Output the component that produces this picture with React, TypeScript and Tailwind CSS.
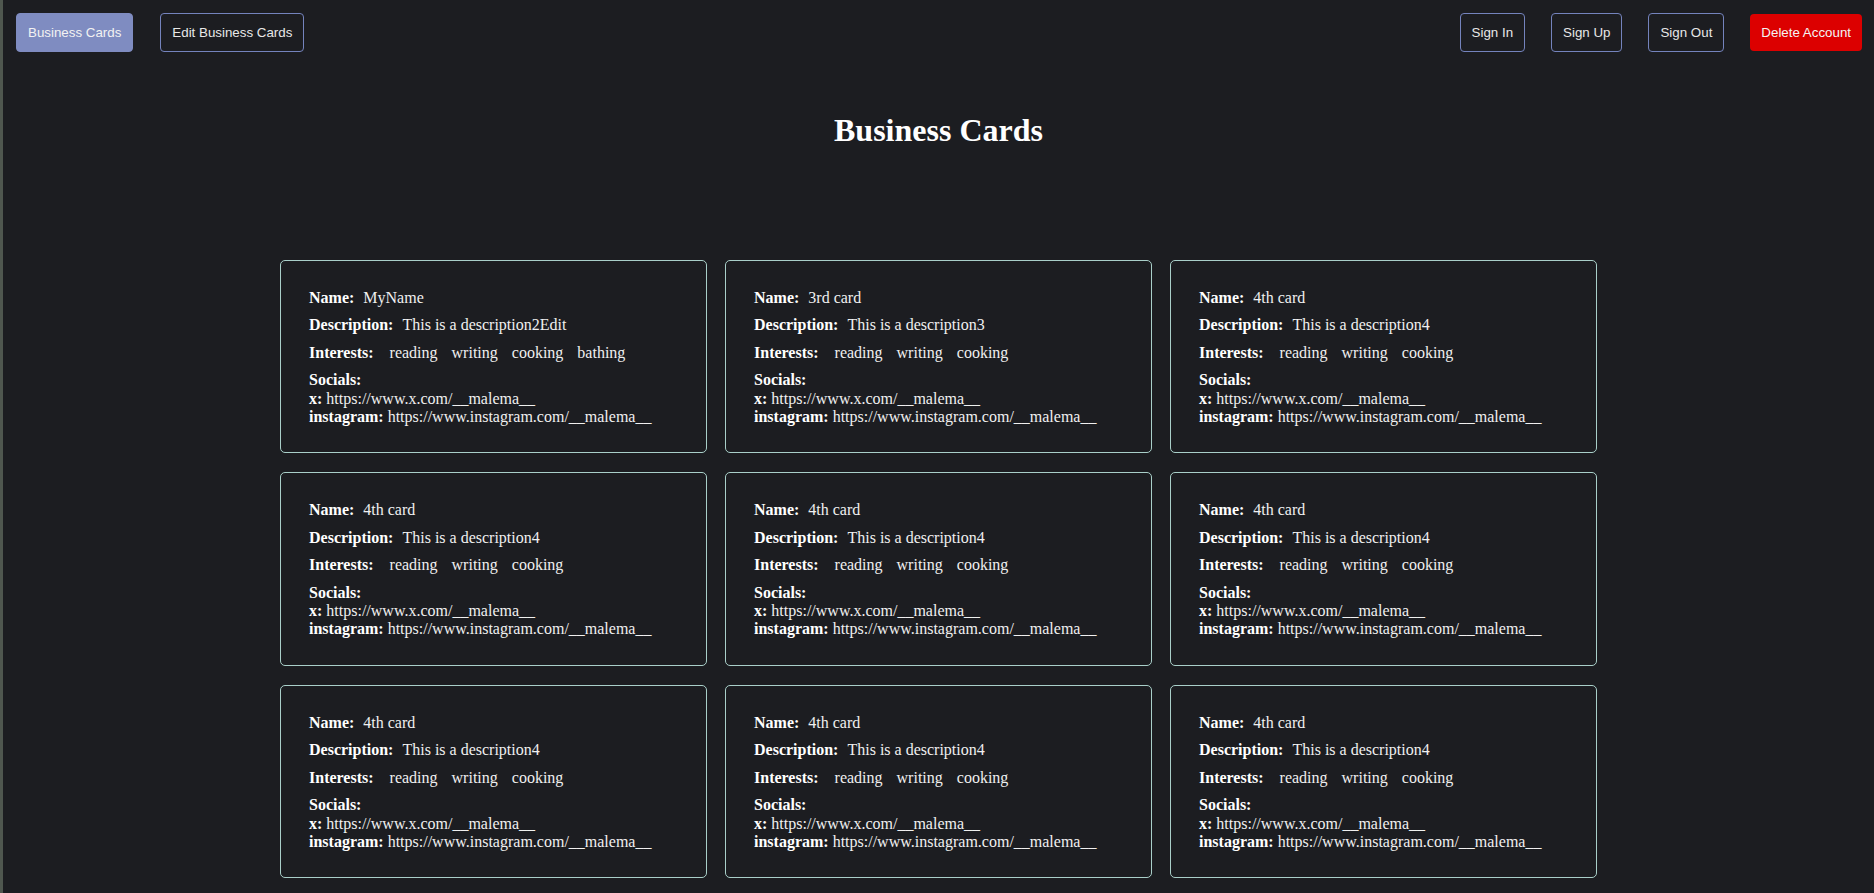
import React from 'react';

type Card = {
  name: string;
  description: string;
  interests: string[];
  socials: { label: string; url: string }[];
};

const socials = [
  { label: 'x', url: 'https://www.x.com/__malema__' },
  { label: 'instagram', url: 'https://www.instagram.com/__malema__' },
];

const fourth: Card = {
  name: '4th card',
  description: 'This is a description4',
  interests: ['reading', 'writing', 'cooking'],
  socials,
};

const cards: Card[] = [
  {
    name: 'MyName',
    description: 'This is a description2Edit',
    interests: ['reading', 'writing', 'cooking', 'bathing'],
    socials,
  },
  {
    name: '3rd card',
    description: 'This is a description3',
    interests: ['reading', 'writing', 'cooking'],
    socials,
  },
  fourth,
  fourth,
  fourth,
  fourth,
  fourth,
  fourth,
  fourth,
];

function NavButton({ label, active }: { label: string; active?: boolean }) {
  return (
    <button
      className={
        active
          ? 'h-[39px] rounded-[4px] border border-[#7f8cc1] bg-[#7f8cc1] px-[11px] text-[13.333px] text-[#f2f2f2]'
          : 'h-[39px] rounded-[4px] border border-[#7483bd] bg-transparent px-[11px] text-[13.333px] text-[#e8e8e8]'
      }
    >
      {label}
    </button>
  );
}

function BusinessCard({ card }: { card: Card }) {
  return (
    <div className="rounded-[5px] border border-[#a9cfc9] px-[28px] pb-[26px] pt-[28px]">
      <div className="flex flex-col gap-[9px] font-['Liberation_Serif',serif] text-[16px] leading-[18.4px] text-[#f0f0f0]">
        <div className="flex gap-[9px]">
          <span className="font-bold text-white">Name:</span>
          <span>{card.name}</span>
        </div>
        <div className="flex gap-[9px]">
          <span className="font-bold text-white">Description:</span>
          <span>{card.description}</span>
        </div>
        <div className="flex gap-[14px]">
          <span className="mr-[2px] font-bold text-white">Interests:</span>
          {card.interests.map((interest, i) => (
            <span key={i}>{interest}</span>
          ))}
        </div>
        <div>
          <div className="font-bold text-white">Socials:</div>
          {card.socials.map((s) => (
            <div key={s.label}>
              <span className="font-bold text-white">{s.label}:</span> {s.url}
            </div>
          ))}
        </div>
      </div>
    </div>
  );
}

export default function App() {
  return (
    <div className="flex min-h-screen bg-[#1c1d21] font-['Liberation_Sans',Arial,sans-serif]">
      <div className="w-[3px] shrink-0 bg-[#4f574f]" />
      <main className="flex-1 pb-10">
        <nav className="flex items-center justify-between pl-[13px] pr-[12px] pt-[13px]">
          <div className="flex items-center gap-[27px]">
            <NavButton label="Business Cards" active />
            <NavButton label="Edit Business Cards" />
          </div>
          <div className="flex items-center gap-[26px]">
            <NavButton label="Sign In" />
            <NavButton label="Sign Up" />
            <NavButton label="Sign Out" />
            <button className="h-[37px] rounded-[4px] bg-[#dc0000] px-[11px] text-[13.333px] text-[#f4f4f4]">
              Delete Account
            </button>
          </div>
        </nav>

        <h1 className="mt-[60px] text-center font-['Liberation_Serif',serif] text-[32px] font-bold leading-[normal] text-white">
          Business Cards
        </h1>

        <section className="mx-auto mt-[111px] grid w-[1317px] grid-cols-3 gap-x-[18px] gap-y-[19px]">
          {cards.map((card, i) => (
            <BusinessCard key={i} card={card} />
          ))}
        </section>
      </main>
    </div>
  );
}
